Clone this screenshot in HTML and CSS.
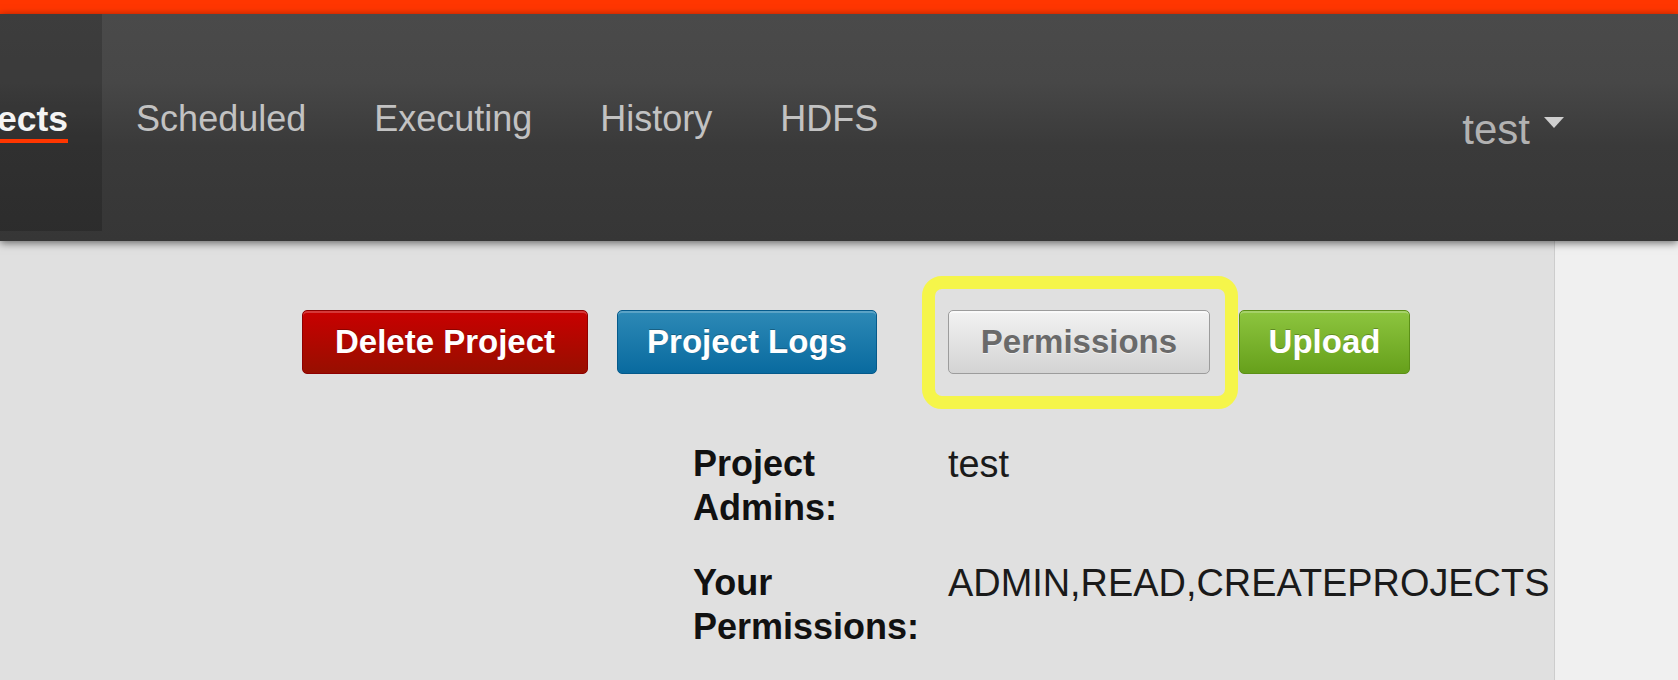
FILE: index.html
```html
<!DOCTYPE html>
<html lang="en">
<head>
<meta charset="utf-8">
<title>Project</title>
<link rel="stylesheet" href="styles.css">
</head>
<body>
<div class="topbar"></div>
<header class="navbar">
  <nav class="nav">
    <a class="nav-link active" href="#"><span class="nav-label">Projects</span></a>
    <a class="nav-link" href="#"><span class="nav-label">Scheduled</span></a>
    <a class="nav-link" href="#"><span class="nav-label">Executing</span></a>
    <a class="nav-link" href="#"><span class="nav-label">History</span></a>
    <a class="nav-link" href="#"><span class="nav-label">HDFS</span></a>
  </nav>
  <a class="nav-user" href="#"><span class="user-name">test</span><span class="caret"></span></a>
</header>
<div class="page">
  <main class="main">
    <div class="actions">
      <button class="btn btn-danger">Delete Project</button>
      <button class="btn btn-info">Project Logs</button>
      <span class="highlight"><button class="btn btn-default">Permissions</button></span>
      <button class="btn btn-success">Upload</button>
    </div>
    <dl class="info">
      <dt>Project Admins:</dt>
      <dd>test</dd>
      <dt>Your Permissions:</dt>
      <dd>ADMIN,READ,CREATEPROJECTS</dd>
    </dl>
  </main>
  <aside class="side"></aside>
</div>
</body>
</html>
```
FILE: styles.css
```css
html, body {
  margin: 0;
  padding: 0;
}
body {
  width: 1678px;
  height: 680px;
  overflow: hidden;
  background: #f0f0f0;
  font-family: "Liberation Sans", Arial, sans-serif;
}
.topbar {
  height: 14px;
  background: #ff3600;
}
.navbar {
  position: relative;
  z-index: 2;
  height: 227px;
  display: flex;
  align-items: flex-start;
  background: linear-gradient(#4a4a4a 0%, #474747 30%, #3a3a3a 58%, #363636 100%);
  box-shadow: 0 2px 8px rgba(0, 0, 0, 0.55);
}
.nav {
  display: flex;
  margin-left: -106px;
}
.nav-link {
  box-sizing: border-box;
  height: 217px;
  padding: 85px 34px 0;
  font-size: 36px;
  line-height: 40px;
  color: #c2c2c2;
  text-decoration: none;
}
.nav-label {
  display: inline-block;
  border-bottom: 4px solid transparent;
}
.nav-link.active {
  background: rgba(0, 0, 0, 0.17);
  color: #f4f4f4;
  font-weight: bold;
  font-size: 35.5px;
}
.nav-link.active .nav-label {
  border-bottom-color: #ff3600;
}
.nav-user {
  margin-left: auto;
  padding: 92px 114px 0 0;
  display: flex;
  align-items: flex-start;
  color: #b2b2b2;
  text-decoration: none;
  font-size: 42px;
  line-height: 48px;
}
.caret {
  width: 0;
  height: 0;
  margin: 11px 0 0 14px;
  border-top: 11px solid #cfcfcf;
  border-left: 10px solid transparent;
  border-right: 10px solid transparent;
}
.page {
  display: flex;
  height: 439px;
}
.main {
  width: 1554px;
  background: #e0e0e0;
  border-right: 1px solid #cdcdcd;
  padding-top: 69px;
}
.side {
  flex: 1;
  background: #f0f0f0;
}
.actions {
  display: flex;
  gap: 29px;
  padding-left: 302px;
}
.btn {
  box-sizing: border-box;
  height: 64px;
  padding: 0;
  border: 1px solid;
  border-radius: 5px;
  font-family: "Liberation Sans", Arial, sans-serif;
  font-size: 33px;
  font-weight: bold;
  line-height: 62px;
  text-align: center;
  white-space: nowrap;
  color: #fff;
  text-shadow: 0 -1px 0 rgba(0, 0, 0, 0.25);
  box-shadow: inset 0 2px 0 rgba(255, 255, 255, 0.22);
  cursor: pointer;
}
.btn-danger {
  width: 286px;
  background: linear-gradient(#c90000, #970f00);
  border-color: #8e0000;
}
.btn-info {
  width: 260px;
  background: linear-gradient(#2d89b6, #096a9f);
  border-color: #055a8b;
}
.btn-success {
  width: 171px;
  background: linear-gradient(#8dc53f, #66a01b);
  border-color: #5c9017;
}
.btn-default {
  width: 262px;
  background: linear-gradient(#f2f2f2, #d3d3d3);
  border-color: #9c9c9c;
  color: #6a6a6a;
  text-shadow: 0 1px 0 rgba(255, 255, 255, 0.6);
  box-shadow: inset 0 2px 0 rgba(255, 255, 255, 0.6);
}
.highlight {
  position: relative;
  display: flex;
  margin-left: 42px;
}
.highlight::after {
  content: "";
  position: absolute;
  top: -34px;
  left: -26px;
  right: -28px;
  bottom: -35px;
  border: 13px solid #f5f54a;
  border-radius: 20px;
  pointer-events: none;
}
.info {
  display: grid;
  grid-template-columns: 255px auto;
  row-gap: 31px;
  margin: 68px 0 0 693px;
}
.info dt {
  font-size: 36px;
  font-weight: bold;
  line-height: 44px;
  color: #111;
  padding-right: 10px;
}
.info dd {
  margin: 0;
  font-size: 37.9px;
  line-height: 44px;
  color: #1a1a1a;
}
```
